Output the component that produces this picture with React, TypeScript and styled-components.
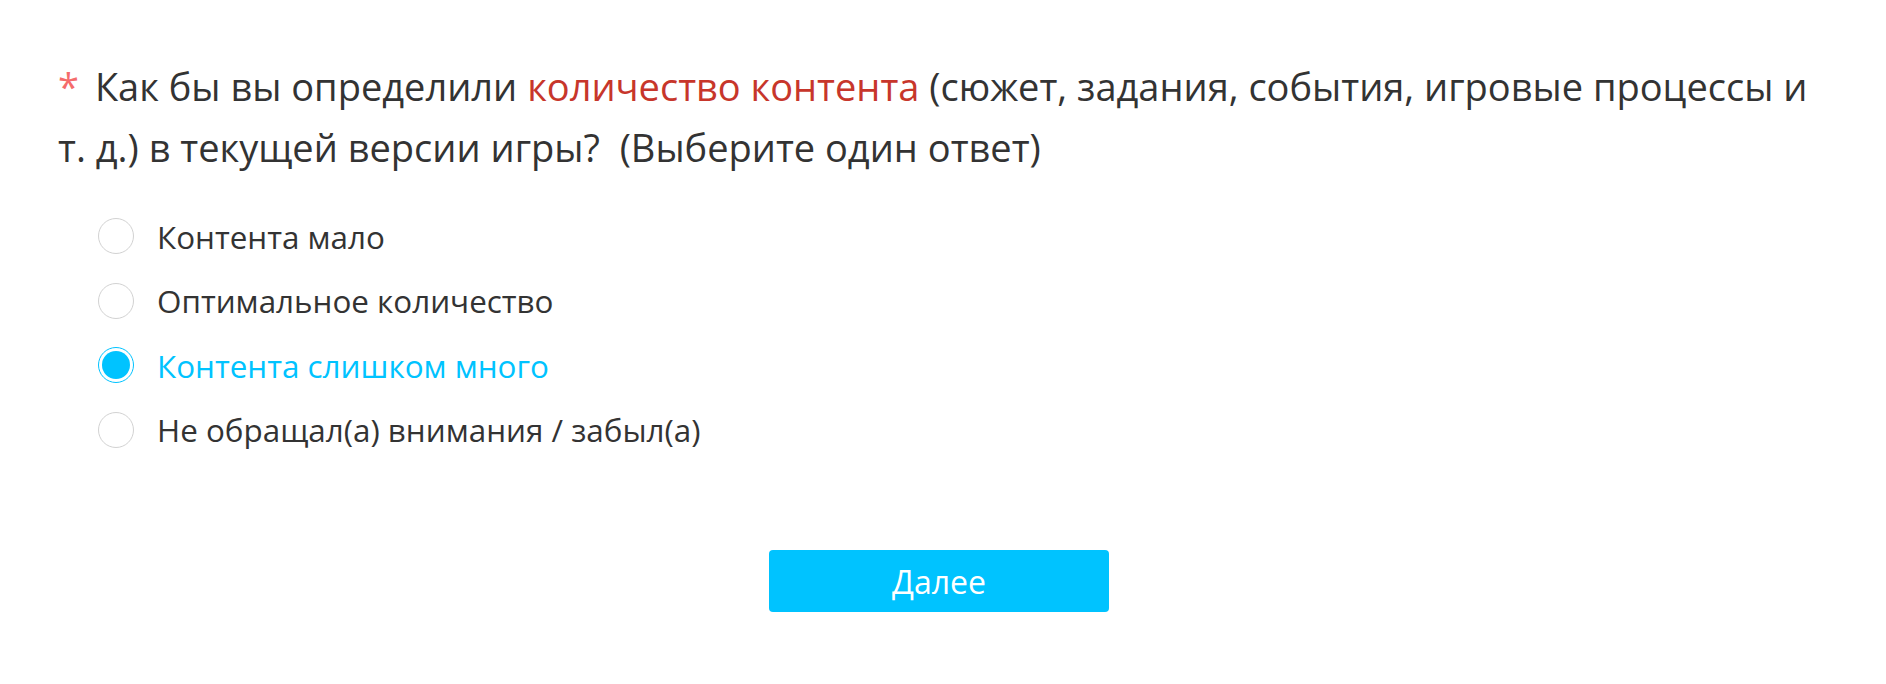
import React, { useState } from 'react';
import styled, { createGlobalStyle } from 'styled-components';

const GlobalStyle = createGlobalStyle`
  html, body {
    margin: 0;
    padding: 0;
    background: #ffffff;
  }
  body {
    font-family: 'Open Sans', 'Noto Sans', sans-serif;
    color: #333333;
  }
`;

const Page = styled.div`
  padding: 56px 0 0 58px;
  width: 1762px;
`;

const Question = styled.div`
  font-size: 38px;
  line-height: 61px;
  color: #333333;
`;

const Star = styled.span`
  color: #f56c6c;
  margin-right: 16px;
`;

const Accent = styled.span`
  color: #c7362b;
`;

const OptionList = styled.div`
  margin-top: 26px;
  padding-left: 40px;
  display: flex;
  flex-direction: column;
`;

const OptionRow = styled.label<{ $active: boolean }>`
  display: flex;
  align-items: center;
  gap: 23px;
  height: 64.5px;
  font-size: 31.4px;
  color: ${(p) => (p.$active ? '#00c3ff' : '#333333')};
  cursor: pointer;
`;

const Radio = styled.span<{ $active: boolean }>`
  width: 36px;
  height: 36px;
  box-sizing: border-box;
  border-radius: 50%;
  border: 1px solid ${(p) => (p.$active ? '#00c3ff' : '#d2d2d2')};
  display: flex;
  align-items: center;
  justify-content: center;
  flex-shrink: 0;
  &::after {
    content: '';
    width: 28px;
    height: 28px;
    border-radius: 50%;
    background: #00c3ff;
    display: ${(p) => (p.$active ? 'block' : 'none')};
  }
`;

const Footer = styled.div`
  display: flex;
  justify-content: center;
  margin-top: 88px;
`;

const NextButton = styled.button`
  width: 340px;
  height: 62px;
  border: none;
  border-radius: 4px;
  background: #00c3ff;
  color: #ffffff;
  font-family: 'Open Sans', 'Noto Sans', sans-serif;
  font-size: 32px;
  cursor: pointer;
`;

const options = [
  'Контента мало',
  'Оптимальное количество',
  'Контента слишком много',
  'Не обращал(а) внимания / забыл(а)',
];

export default function App() {
  const [selected, setSelected] = useState(2);
  return (
    <>
      <GlobalStyle />
      <Page>
        <Question>
          <Star>*</Star>
          Как бы вы определили <Accent>количество контента</Accent> (сюжет,
          задания, события, игровые процессы и т. д.) в текущей версии
          игры?{'\u00a0 '}(Выберите один ответ)
        </Question>
        <OptionList>
          {options.map((o, i) => (
            <OptionRow
              key={o}
              $active={selected === i}
              onClick={() => setSelected(i)}
            >
              <Radio $active={selected === i} />
              {o}
            </OptionRow>
          ))}
        </OptionList>
        <Footer>
          <NextButton>Далее</NextButton>
        </Footer>
      </Page>
    </>
  );
}
